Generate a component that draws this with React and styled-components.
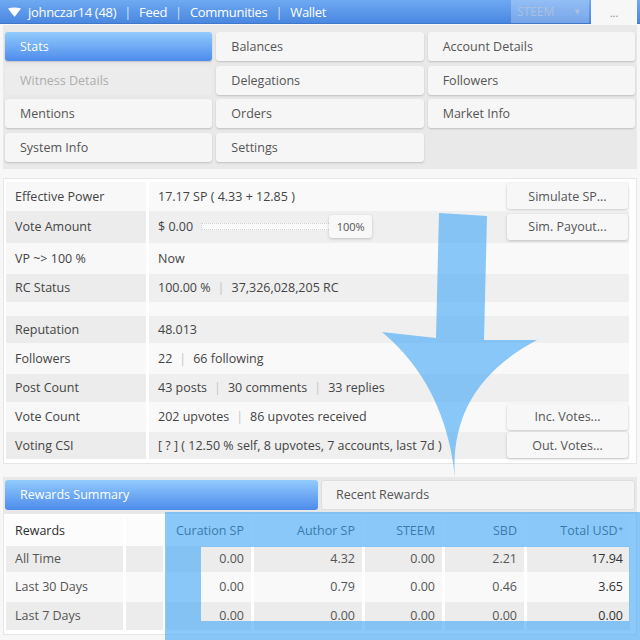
import React from 'react';
import styled, { createGlobalStyle } from 'styled-components';

const GlobalStyle = createGlobalStyle`
  body {
    margin: 0;
    background: #f7f7f7;
    font-family: "Open Sans", "DejaVu Sans", sans-serif;
    font-size: 12px;
    color: #444;
  }
`;

const Page = styled.div`
  position: relative;
  width: 640px;
  height: 640px;
  overflow: hidden;
`;

// top navigation bar
const TopBar = styled.div`
  height: 23px;
  display: flex;
  align-items: stretch;
  background: linear-gradient(#6ea9f2, #4a87e0);
  border-bottom: 1px solid #3f78c9;
`;

const NavLeft = styled.div`
  display: flex;
  align-items: center;
  padding-left: 7px;
  color: #fff;
  font-size: 13px;
  letter-spacing: -0.3px;
`;

const NavSep = styled.span`
  margin: 0 8px;
  color: rgba(255, 255, 255, 0.75);
`;

const CurrencyBox = styled.div`
  margin-left: auto;
  width: 78px;
  display: flex;
  align-items: center;
  justify-content: space-between;
  padding: 0 9px 0 6px;
  box-sizing: border-box;
  background: rgba(255, 255, 255, 0.25);
  color: #a9c0de;
  font-size: 12px;

  span { font-size: 7px; }
`;

const MoreBox = styled.div`
  width: 46px;
  height: 25px;
  margin: 0 3px 0 2px;
  display: flex;
  align-items: center;
  justify-content: center;
  background: #f7f7f7;
  color: #888;
  font-size: 11px;
`;

// menu tabs
const MenuPanel = styled.div`
  margin: 1px 3px 0;
  padding: 7px 2px;
  background: #e9e9e9;
  display: grid;
  grid-template-columns: repeat(3, 1fr);
  gap: 4.5px 4px;
`;

const MenuButton = styled.div`
  height: 29px;
  display: flex;
  align-items: center;
  padding-left: 15px;
  border-radius: 3px;
  font-size: 12.5px;
  background: ${p => (p.active ? 'linear-gradient(#92cbfd, #4d8bec)' : p.disabled ? '#ececec' : '#f6f6f6')};
  color: ${p => (p.active ? '#fff' : p.disabled ? '#adadad' : '#555')};
  box-shadow: ${p => (p.disabled ? 'none' : '0 1px 2px rgba(0,0,0,0.18)')};
`;

const EmptyCell = styled.div``;

// stats table
const StatsPanel = styled.div`
  margin: 9px 3px 0;
  padding: 3px 7px 4px 2px;
  background: #fff;
  border: 1px solid #e6e6e6;
`;

const StatRow = styled.div`
  display: grid;
  grid-template-columns: 140px 1fr;
  column-gap: 3px;
  height: ${p => p.h}px;
`;

const LabelCell = styled.div`
  display: flex;
  align-items: center;
  padding-left: 9px;
  background: ${p => (p.alt ? '#ececec' : '#f8f8f8')};
  color: #444;
  font-size: 12.5px;
`;

const ValueCell = styled.div`
  display: flex;
  align-items: center;
  padding-left: 9px;
  background: ${p => (p.alt ? '#efefef' : '#f9f9f9')};
  color: #444;
  font-size: 12.5px;
`;

const Sep = styled.span`
  margin: 0 7px;
  color: #c4c4c4;
`;

const SideButton = styled.div`
  margin-left: auto;
  margin-right: 1px;
  width: 121px;
  height: 26px;
  display: flex;
  align-items: center;
  justify-content: center;
  border-radius: 3px;
  background: #f7f7f7;
  box-shadow: 0 1px 3px rgba(0, 0, 0, 0.2);
  color: #555;
  font-size: 12.5px;
`;

const SliderTrack = styled.div`
  width: 128px;
  height: 5px;
  margin-left: 8px;
  border: 1px dotted #d4d4d4;
  background: #fafafa;
`;

const PercentButton = styled.div`
  width: 43px;
  height: 23px;
  margin-left: -2px;
  display: flex;
  align-items: center;
  justify-content: center;
  border-radius: 3px;
  background: #f8f8f8;
  box-shadow: 0 1px 3px rgba(0, 0, 0, 0.2);
  font-size: 11px;
  color: #555;
`;

// rewards
const RewardTabs = styled.div`
  margin: 13px 3px 0;
  padding: 3px 2px 4px;
  background: #e8e8e8;
  display: grid;
  grid-template-columns: 313px 1fr;
  gap: 3px;
`;

const RewardTab = styled.div`
  height: 30px;
  display: flex;
  align-items: center;
  padding-left: 15px;
  border-radius: 3px;
  font-size: 12.5px;
  background: ${p => (p.active ? 'linear-gradient(#92cbfd, #4d8bec)' : '#f4f4f4')};
  color: ${p => (p.active ? '#fff' : '#555')};
  box-shadow: ${p => (p.active ? 'none' : 'inset 0 0 0 1px #dedede')};
`;

const RewardsPanel = styled.div`
  margin: 0 3px;
  padding: 2px 6px 4px 2px;
  background: #fff;
  border: 1px solid #e6e6e6;
  border-top: none;
`;

const RewardRow = styled.div`
  display: grid;
  grid-template-columns: 117px 37px 85px 108px 77px 79px 1fr;
  column-gap: 3px;
  height: ${p => p.h}px;
`;

const RCell = styled.div`
  display: flex;
  align-items: center;
  justify-content: ${p => (p.left ? 'flex-start' : 'flex-end')};
  padding: ${p => (p.left ? '0 0 0 9px' : '0 7px 0 0')};
  background: ${p => (p.head ? '#fcfcfc' : p.alt ? '#ececec' : '#f9f9f9')};
  color: ${p => (p.dark ? '#333' : p.head ? '#2e2e2e' : '#555')};
  font-size: 12.5px;

  sup {
    font-size: 8px;
    margin-left: 1px;
    align-self: flex-start;
    margin-top: 7px;
  }
`;

const Overlay = styled.svg`
  position: absolute;
  top: 0;
  left: 0;
  pointer-events: none;
`;

const stats = [
  { label: 'Effective Power', h: 29, parts: ['17.17 SP ( 4.33 + 12.85 )'], btn: 'Simulate SP...' },
  { label: 'Vote Amount', h: 32, alt: true, slider: true, btn: 'Sim. Payout...' },
  { label: 'VP ~> 100 %', h: 31, parts: ['Now'] },
  { label: 'RC Status', h: 28, alt: true, parts: ['100.00 %', '37,326,028,205 RC'] },
  { label: '', h: 14, parts: [] },
  { label: 'Reputation', h: 27, alt: true, parts: ['48.013'] },
  { label: 'Followers', h: 31, parts: ['22', '66 following'] },
  { label: 'Post Count', h: 28, alt: true, parts: ['43 posts', '30 comments', '33 replies'] },
  { label: 'Vote Count', h: 30, parts: ['202 upvotes', '86 upvotes received'], btn: 'Inc. Votes...' },
  { label: 'Voting CSI', h: 27, alt: true, parts: ['[ ? ] ( 12.50 % self, 8 upvotes, 7 accounts, last 7d )'], btn: 'Out. Votes...' },
];

const rewards = [
  { label: 'All Time', h: 26, alt: true, vals: ['0.00', '4.32', '0.00', '2.21', '17.94'] },
  { label: 'Last 30 Days', h: 30, vals: ['0.00', '0.79', '0.00', '0.46', '3.65'] },
  { label: 'Last 7 Days', h: 28, alt: true, vals: ['0.00', '0.00', '0.00', '0.00', '0.00'] },
];

const menu = [
  ['Stats', 'active'], ['Balances'], ['Account Details'],
  ['Witness Details', 'disabled'], ['Delegations'], ['Followers'],
  ['Mentions'], ['Orders'], ['Market Info'],
  ['System Info'], ['Settings'],
];

function Joined({ parts }) {
  return parts.map((p, i) => (
    <React.Fragment key={i}>
      {i > 0 && <Sep>|</Sep>}
      {p}
    </React.Fragment>
  ));
}

export default function App() {
  return (
    <Page>
      <GlobalStyle />
      <TopBar>
        <NavLeft>
          <svg width="15" height="10" viewBox="0 0 15 10" style={{ marginRight: 6 }}>
            <path d="M1 1.5 Q7.5 -0.5 14 1.5 L8.3 9 Q7.5 10 6.7 9 Z" fill="#fff" />
          </svg>
          johnczar14 (48)<NavSep>|</NavSep>Feed<NavSep>|</NavSep>Communities<NavSep>|</NavSep>Wallet
        </NavLeft>
        <CurrencyBox>STEEM<span>▼</span></CurrencyBox>
        <MoreBox>...</MoreBox>
      </TopBar>

      <MenuPanel>
        {menu.map(([name, state]) => (
          <MenuButton key={name} active={state === 'active'} disabled={state === 'disabled'}>
            {name}
          </MenuButton>
        ))}
        <EmptyCell />
      </MenuPanel>

      <StatsPanel>
        {stats.map((s, i) => (
          <StatRow key={i} h={s.h}>
            <LabelCell alt={s.alt}>{s.label}</LabelCell>
            <ValueCell alt={s.alt}>
              {s.slider ? (
                <>
                  $ 0.00
                  <SliderTrack />
                  <PercentButton>100%</PercentButton>
                </>
              ) : (
                <Joined parts={s.parts} />
              )}
              {s.btn && <SideButton>{s.btn}</SideButton>}
            </ValueCell>
          </StatRow>
        ))}
      </StatsPanel>

      <RewardTabs>
        <RewardTab active>Rewards Summary</RewardTab>
        <RewardTab>Recent Rewards</RewardTab>
      </RewardTabs>

      <RewardsPanel>
        <RewardRow h={30}>
          <RCell head left>Rewards</RCell>
          <RCell head />
          <RCell head>Curation SP</RCell>
          <RCell head>Author SP</RCell>
          <RCell head>STEEM</RCell>
          <RCell head>SBD</RCell>
          <RCell head>Total USD<sup>*</sup></RCell>
        </RewardRow>
        {rewards.map(r => (
          <RewardRow key={r.label} h={r.h}>
            <RCell left alt={r.alt}>{r.label}</RCell>
            <RCell alt={r.alt} />
            {r.vals.map((v, i) => (
              <RCell key={i} alt={r.alt} dark={i === 4}>{v}</RCell>
            ))}
          </RewardRow>
        ))}
      </RewardsPanel>

      <Overlay width="640" height="640" viewBox="0 0 640 640">
        <path
          fillRule="evenodd"
          fill="rgba(66,168,246,0.62)"
          d="M165 512 H640 V640 H165 Z M201 547 V621 H629 V547 Z"
        />
        <path
          fill="rgba(66,168,246,0.62)"
          d="M439 213 L487 216 L484 340 L537 340 Q448 387 455 478 Q445.5 385 382 332 L436 338 Z"
        />
      </Overlay>
    </Page>
  );
}
